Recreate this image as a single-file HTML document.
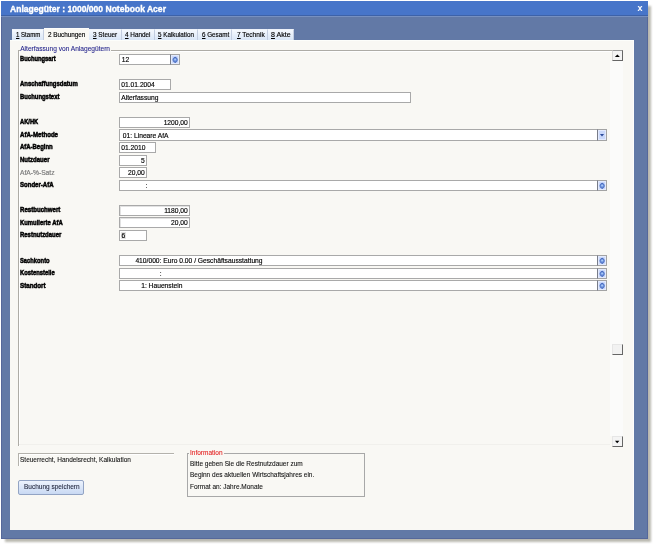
<!DOCTYPE html>
<html><head><meta charset="utf-8">
<style>
*{margin:0;padding:0;box-sizing:border-box}
html,body{width:656px;height:548px;overflow:hidden;background:#fff;font-family:"Liberation Sans",sans-serif;}
.a{position:absolute}
#shadow{left:5px;top:6px;width:646px;height:536px;background:#b9b8b0;filter:blur(1.2px)}
#win{left:1px;top:1px;width:647px;height:538px;background:#6279a6;border:1px solid #56689a}
#title{left:1px;top:1px;width:647px;height:15px;background:#4775c9;border-bottom:1px solid #3d62a8}
#title span{position:absolute;left:9px;top:3px;font-weight:bold;font-size:8.55px;color:#fff;white-space:nowrap;line-height:11px;-webkit-text-stroke:0.35px #fff}
#close{left:637.6px;top:2.6px;color:#fff;font-weight:bold;font-size:9px;line-height:10px}
#content{left:10px;top:40px;width:624px;height:490px;background:#f9f8f4;border-right:1px solid #fdfdfd;border-top:1px solid #fdfefb}
#track{left:610px;top:61px;width:13px;height:375px;background:#fbfbfa}
.tab{height:11px;background:linear-gradient(#f4f8fd,#d9e6f7);border-right:1px solid #c3cde0;border-top:1px solid #eef2f9}
.ttxt{font-size:6.8px;line-height:8px;color:#000;-webkit-text-stroke:0.15px #000;white-space:nowrap;transform-origin:0 0}
.ttxt u{text-decoration:underline;text-decoration-thickness:0.5px;text-underline-offset:0.8px}
.tab.act{height:13px;background:#f9f8f4;border:none;border-top:1px solid #fdfdfb}
.lbl{font-size:7px;color:#000;-webkit-text-stroke:0.5px currentColor;white-space:nowrap;line-height:8px;left:20.3px;transform-origin:0 0}
.in{background:#fff;border:1px solid #a9a9a9;font-size:6.7px;line-height:9px;color:#000;-webkit-text-stroke:0.15px #000;white-space:nowrap}
.btn{background:#cad8fa;border:1px solid #a3a3a3;border-left-color:#787c88;box-shadow:inset 0 0 0 1px #e3eafd}
.txt{font-size:6.5px;color:#111;-webkit-text-stroke:0.08px currentColor;white-space:nowrap;line-height:8px}
.sunk{box-shadow:inset 1px 1px 0 #e2e2e2}
</style></head><body><div id="root" style="position:absolute;left:0;top:0;width:656px;height:548px;will-change:transform">
<div class="a" id="shadow"></div>
<div class="a" id="win"></div>
<div class="a" id="title"><span>Anlagegüter : 1000/000 Notebook Acer</span></div>
<div class="a" id="close">x</div>
<div class="a" style="left:1px;top:16px;width:647px;height:1px;background:#7790c0"></div>
<div class="a" id="content"></div>
<div class="a" id="track"></div>

<div class="a tab" style="left:11.7px;width:32.0px;top:29px"></div><div class="a ttxt" style="left:16.1px;top:30.65px;transform:scaleX(0.893)"><u>1</u> Stamm</div>
<div class="a tab act" style="left:43.8px;width:44.8px;top:27.9px"></div><div class="a ttxt" style="left:47.5px;top:30.65px;transform:scaleX(0.933)">2 Buchungen</div>
<div class="a tab" style="left:89.1px;width:32.6px;top:29px"></div><div class="a ttxt" style="left:92.8px;top:30.65px;transform:scaleX(0.941)"><u>3</u> Steuer</div>
<div class="a tab" style="left:121.7px;width:32.9px;top:29px"></div><div class="a ttxt" style="left:125.3px;top:30.65px;transform:scaleX(0.937)"><u>4</u> Handel</div>
<div class="a tab" style="left:154.6px;width:43.0px;top:29px"></div><div class="a ttxt" style="left:158.3px;top:30.65px;transform:scaleX(0.922)"><u>5</u> Kalkulation</div>
<div class="a tab" style="left:197.6px;width:34.8px;top:29px"></div><div class="a ttxt" style="left:201.5px;top:30.65px;transform:scaleX(0.923)"><u>6</u> Gesamt</div>
<div class="a tab" style="left:232.4px;width:35.3px;top:29px"></div><div class="a ttxt" style="left:236.8px;top:30.65px;transform:scaleX(0.968)"><u>7</u> Technik</div>
<div class="a tab" style="left:267.7px;width:26.2px;top:29px"></div><div class="a ttxt" style="left:271.0px;top:30.65px;transform:scaleX(1.037)"><u>8</u> Akte</div>

<!-- fieldset -->
<div class="a" style="left:18px;top:50px;width:595px;height:396px;border-left:1px solid #aeaca6;border-top:1px solid #aeaca6;box-shadow:inset 1px 1px 0 #fff"></div>
<div class="a txt" style="left:20.2px;top:44.6px;font-size:6.6px;color:#25258c;background:#f9f8f4;padding-right:0.5px">Alterfassung von Anlagegütern</div>

<div class="a lbl" style="top:55.00px;transform:scaleX(0.827);font-weight:bold;color:#000">Buchungsart</div>
<div class="a in" style="left:119px;top:54px;width:61px;height:11px;"><span style="position:absolute;left:1.8px;top:0px">12</span></div><div class="a btn" style="left:170px;top:54px;width:10px;height:11px"><svg width="8" height="9" viewBox="0 0 8 9" style="position:absolute;left:0;top:0"><path d="M4.15 1.8 L5.6 3.1 L2.7 3.1 Z M4.15 7.9 L5.6 6.6 L2.7 6.6 Z" fill="#3558b0"/><circle cx="4.15" cy="4.85" r="2.3" fill="#6a90dc" stroke="#3a5db4" stroke-width="0.6"/><circle cx="4.15" cy="4.6" r="1" fill="#a8c8f6"/></svg></div>
<div class="a lbl" style="top:80.30px;transform:scaleX(0.853);font-weight:bold;color:#000">Anschaffungsdatum</div>
<div class="a in" style="left:119px;top:79px;width:52px;height:11px;"><span style="position:absolute;left:1.3px;top:0px">01.01.2004</span></div>
<div class="a lbl" style="top:92.50px;transform:scaleX(0.844);font-weight:bold;color:#000">Buchungstext</div>
<div class="a in" style="left:119px;top:92px;width:292px;height:11px;"><span style="position:absolute;left:1.3px;top:0px">Alterfassung</span></div>
<div class="a lbl" style="top:118.00px;transform:scaleX(0.821);font-weight:bold;color:#000">AK/HK</div>
<div class="a in" style="left:119px;top:117px;width:71px;height:11px;"><span style="position:absolute;right:1.2px;top:0px">1200,00</span></div>
<div class="a lbl" style="top:131.00px;transform:scaleX(0.873);font-weight:bold;color:#000">AfA-Methode</div>
<div class="a in" style="left:119px;top:129px;width:488px;height:12px;"><span style="position:absolute;left:2.8px;top:0.7px">01: Lineare AfA</span></div><div class="a btn" style="left:597px;top:129px;width:10px;height:12px"><svg width="8" height="9" viewBox="0 0 8 9" style="position:absolute;left:0;top:0"><path d="M1.9 4 L6.1 4 L4 6.5 Z" fill="#2d4c9c"/></svg></div>
<div class="a lbl" style="top:143.40px;transform:scaleX(0.850);font-weight:bold;color:#000">AfA-Beginn</div>
<div class="a in" style="left:119px;top:142px;width:37px;height:11px;"><span style="position:absolute;left:1.3px;top:0px">01.2010</span></div>
<div class="a lbl" style="top:156.10px;transform:scaleX(0.862);font-weight:bold;color:#000">Nutzdauer</div>
<div class="a in" style="left:119px;top:155px;width:28px;height:11px;"><span style="position:absolute;right:1.2px;top:0px">5</span></div>
<div class="a lbl" style="top:168.90px;transform:scaleX(0.954);font-weight:normal;color:#7c7c7c;-webkit-text-stroke:0.2px currentColor">AfA-%-Satz</div>
<div class="a in" style="left:119px;top:167px;width:28px;height:11px;"><span style="position:absolute;right:1.2px;top:0px">20,00</span></div>
<div class="a lbl" style="top:180.80px;transform:scaleX(0.864);font-weight:bold;color:#000">Sonder-AfA</div>
<div class="a in" style="left:119px;top:180px;width:488px;height:11px;"><span style="position:absolute;left:25.5px;top:0px">:</span></div><div class="a btn" style="left:597px;top:180px;width:10px;height:11px"><svg width="8" height="9" viewBox="0 0 8 9" style="position:absolute;left:0;top:0"><path d="M4.15 1.8 L5.6 3.1 L2.7 3.1 Z M4.15 7.9 L5.6 6.6 L2.7 6.6 Z" fill="#3558b0"/><circle cx="4.15" cy="4.85" r="2.3" fill="#6a90dc" stroke="#3a5db4" stroke-width="0.6"/><circle cx="4.15" cy="4.6" r="1" fill="#a8c8f6"/></svg></div>
<div class="a lbl" style="top:206.40px;transform:scaleX(0.873);font-weight:bold;color:#000">Restbuchwert</div>
<div class="a in sunk" style="left:119px;top:205px;width:71px;height:11px;"><span style="position:absolute;right:1.2px;top:0px">1180,00</span></div>
<div class="a lbl" style="top:218.70px;transform:scaleX(0.842);font-weight:bold;color:#000">Kumulierte AfA</div>
<div class="a in sunk" style="left:119px;top:217px;width:71px;height:11px;"><span style="position:absolute;right:1.2px;top:0px">20,00</span></div>
<div class="a lbl" style="top:231.30px;transform:scaleX(0.850);font-weight:bold;color:#000">Restnutzdauer</div>
<div class="a in" style="left:119px;top:230px;width:28px;height:11px;"><span style="position:absolute;left:1.3px;top:0px"><span style="background:#e4e4e4;padding:0 0.3px">6</span></span></div>
<div class="a lbl" style="top:256.60px;transform:scaleX(0.827);font-weight:bold;color:#000">Sachkonto</div>
<div class="a in" style="left:119px;top:255px;width:488px;height:11px;"><span style="position:absolute;left:15.4px;top:0px">410/000: Euro 0.00 / Geschäftsausstattung</span></div><div class="a btn" style="left:597px;top:255px;width:10px;height:11px"><svg width="8" height="9" viewBox="0 0 8 9" style="position:absolute;left:0;top:0"><path d="M4.15 1.8 L5.6 3.1 L2.7 3.1 Z M4.15 7.9 L5.6 6.6 L2.7 6.6 Z" fill="#3558b0"/><circle cx="4.15" cy="4.85" r="2.3" fill="#6a90dc" stroke="#3a5db4" stroke-width="0.6"/><circle cx="4.15" cy="4.6" r="1" fill="#a8c8f6"/></svg></div>
<div class="a lbl" style="top:269.10px;transform:scaleX(0.834);font-weight:bold;color:#000">Kostenstelle</div>
<div class="a in" style="left:119px;top:268px;width:488px;height:11px;"><span style="position:absolute;left:39.7px;top:0px">:</span></div><div class="a btn" style="left:597px;top:268px;width:10px;height:11px"><svg width="8" height="9" viewBox="0 0 8 9" style="position:absolute;left:0;top:0"><path d="M4.15 1.8 L5.6 3.1 L2.7 3.1 Z M4.15 7.9 L5.6 6.6 L2.7 6.6 Z" fill="#3558b0"/><circle cx="4.15" cy="4.85" r="2.3" fill="#6a90dc" stroke="#3a5db4" stroke-width="0.6"/><circle cx="4.15" cy="4.6" r="1" fill="#a8c8f6"/></svg></div>
<div class="a lbl" style="top:281.60px;transform:scaleX(0.890);font-weight:bold;color:#000">Standort</div>
<div class="a in" style="left:119px;top:280px;width:488px;height:11px;"><span style="position:absolute;left:21.2px;top:0px">1: Hauenstein</span></div><div class="a btn" style="left:597px;top:280px;width:10px;height:11px"><svg width="8" height="9" viewBox="0 0 8 9" style="position:absolute;left:0;top:0"><path d="M4.15 1.8 L5.6 3.1 L2.7 3.1 Z M4.15 7.9 L5.6 6.6 L2.7 6.6 Z" fill="#3558b0"/><circle cx="4.15" cy="4.85" r="2.3" fill="#6a90dc" stroke="#3a5db4" stroke-width="0.6"/><circle cx="4.15" cy="4.6" r="1" fill="#a8c8f6"/></svg></div>

<!-- scrollbar -->
<div class="a" style="left:612px;top:50px;width:11px;height:11px;background:#f4f4f4;border-right:1px solid #666;border-bottom:1px solid #666;border-top:1px solid #9a9a9a;border-left:1px solid #d8d8d8"><svg width="10" height="9" style="position:absolute;left:0;top:0"><path d="M1.9 5.9 L6.9 5.9 L4.4 3.5 Z" fill="#000"/></svg></div>
<div class="a" style="left:612px;top:344px;width:11px;height:11px;background:#f2f2f2;border-right:1px solid #666;border-bottom:1px solid #666;border-top:1px solid #e6e6e6;border-left:1px solid #e6e6e6"></div>
<div class="a" style="left:612px;top:436px;width:11px;height:11px;background:#f4f4f4;border-right:1px solid #666;border-bottom:1px solid #666;border-top:1px solid #e6e6e6;border-left:1px solid #e6e6e6"><svg width="10" height="10" style="position:absolute;left:0;top:0"><path d="M2 3.8 L6.4 3.8 L4.2 6.3 Z" fill="#000"/></svg></div>

<!-- bottom -->
<div class="a" style="left:19px;top:444px;width:591px;height:1px;background:#f1f0ec"></div>
<div class="a" style="left:18px;top:453px;width:156px;height:13px;border-left:1px solid #b4b2ac;border-top:1px solid #b4b2ac;box-shadow:inset 1px 1px 0 #fff"></div>
<div class="a txt" style="left:20px;top:456.3px">Steuerrecht, Handelsrecht, Kalkulation</div>
<div class="a" style="left:18px;top:480px;width:66px;height:15px;border:1px solid #93a4c4;border-radius:2px;background:linear-gradient(#edf3fd,#c9d9f3)"></div>
<div class="a txt" style="left:24px;top:483.4px;color:#1d2238">Buchung speichern</div>

<div class="a" style="left:187px;top:453px;width:178px;height:44px;border:1px solid #a8a8a8"></div>
<div class="a txt" style="left:189px;top:449px;color:#e42222;background:#f9f8f4;padding:0 1px">Information</div>
<div class="a txt" style="left:190px;top:459.5px">Bitte geben Sie die Restnutzdauer zum</div>
<div class="a txt" style="left:190px;top:471px">Beginn des aktuellen Wirtschaftsjahres ein.</div>
<div class="a txt" style="left:190px;top:482.5px">Format an: Jahre.Monate</div>
</div></body></html>
